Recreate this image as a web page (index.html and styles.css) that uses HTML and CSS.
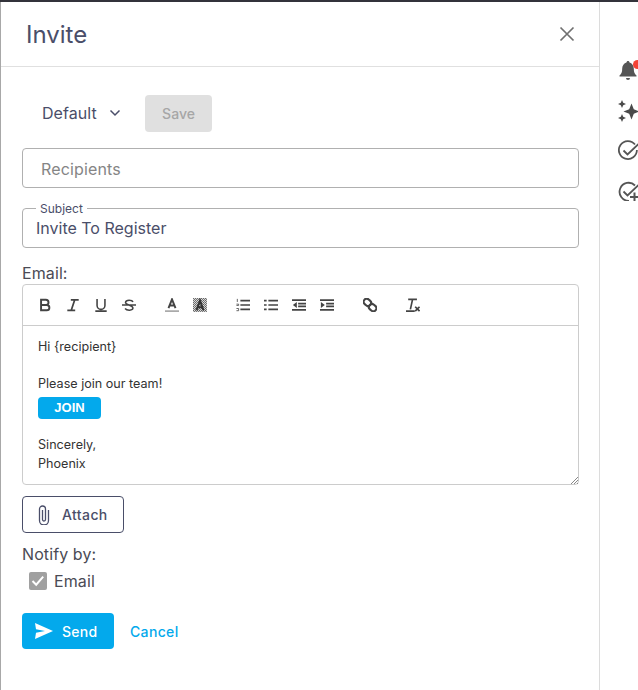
FILE: index.html
```html
<!DOCTYPE html>
<html lang="en">
<head>
    <meta charset="UTF-8">
    <title>Invite</title>
    <link rel="stylesheet" href="styles.css">
</head>
<body>
    <div class="dialog">
        <header class="dialog-header">
            <h1>Invite</h1>
            <button class="close-button" aria-label="Close">
                <svg width="16" height="16" viewBox="0 0 16 16"><path d="M1.5 1.5l13 13M14.5 1.500l-13 13" stroke="#707070" stroke-width="1.700" fill="none"/></svg>
            </button>
        </header>
        <div class="dialog-body">
            <div class="template-row">
                <div class="template-select">
                    <span>Default</span>
                    <svg width="12" height="8" viewBox="0 0 12 8"><path d="M1.500 1.500L6 6l4.500-4.500" stroke="#4a4e69" stroke-width="1.500" fill="none"/></svg>
                </div>
                <button class="save-button">Save</button>
            </div>
            <div class="text-field recipients">Recipients</div>
            <fieldset class="subject-field">
                <legend>Subject</legend>
                <div class="subject-value">Invite To Register</div>
            </fieldset>
            <div class="section-label email-label">Email:</div>
            <div class="editor">
                <div class="editor-toolbar">
                    <div class="tool-group">
                        <svg class="tool" viewBox="0 0 16 16"><path d="M3.500 2h5.500a3 3 0 0 1 0 6H3.500zM3.500 8h6.500a3 3 0 0 1 0 6H3.500z" stroke="#444" stroke-width="2.200" fill="none"/></svg>
                        <svg class="tool" viewBox="0 0 16 16"><path d="M5.500 2h9M1.500 14h9M10 2L6 14" stroke="#444" stroke-width="2" fill="none"/></svg>
                        <svg class="tool" viewBox="0 0 16 16"><path d="M3.500 1v7.500a4.500 4.500 0 0 0 9 0V1M1.500 15h13" stroke="#444" stroke-width="1.800" fill="none"/></svg>
                        <svg class="tool" viewBox="0 0 16 16"><path d="M12.500 4.500C11.500 2 4.500 1.500 4 5c-.4 3 8.500 3 8.500 6.500 0 3-7 3.200-9 .5M0 8h16" stroke="#444" stroke-width="1.700" fill="none"/></svg>
                    </div>
                    <div class="tool-group colors">
                        <svg class="tool" viewBox="0 0 16 16"><path d="M4 11.500L8 1.500l4 10M5.500 8.500h5" stroke="#444" stroke-width="2.200" fill="none"/><path d="M0 15h16" stroke="#aaa" stroke-width="2"/></svg>
                        <svg class="tool" viewBox="0 0 16 16"><defs><pattern id="hatch" width="2.300" height="2.300" patternUnits="userSpaceOnUse"><rect width="1.150" height="1.150" fill="#444"/><rect x="1.150" y="1.150" width="1.150" height="1.150" fill="#444"/></pattern></defs><rect width="16" height="16" fill="url(#hatch)"/><path d="M4 14L8 3l4 11M5.500 10.500h5" stroke="#333" stroke-width="2.400" fill="none"/></svg>
                    </div>
                    <div class="tool-group lists">
                        <svg class="tool" viewBox="0 0 16 16"><path d="M5 3h11M5 8h11M5 13h11" stroke="#444" stroke-width="1.900"/><path d="M1.500 1v3.500M.5 7h2.500v1.500H.5M.5 12h2.500v2.500H.5" stroke="#555" stroke-width="1" fill="none"/></svg>
                        <svg class="tool" viewBox="0 0 16 16"><path d="M5 3h11M5 8h11M5 13h11M0 3h3M0 8h3M0 13h3" stroke="#444" stroke-width="1.900"/></svg>
                        <svg class="tool" viewBox="0 0 16 16"><path d="M0 2.500h16M7 6.500h9M7 9.500h9M0 13.500h16" stroke="#444" stroke-width="1.900"/><path d="M5.500 4.500v7L1 8z" fill="#444"/></svg>
                        <svg class="tool" viewBox="0 0 16 16"><path d="M0 2.500h16M7 6.500h9M7 9.500h9M0 13.500h16" stroke="#444" stroke-width="1.900"/><path d="M1 4.500v7L5.500 8z" fill="#444"/></svg>
                    </div>
                    <div class="tool-group link">
                        <svg class="tool" viewBox="0 0 16 16"><g fill="none" stroke="#444" stroke-width="2.400"><rect x="0.500" y="1.500" width="9" height="7" rx="3.500" transform="rotate(40 5 5)"/><rect x="6.500" y="7.500" width="9" height="7" rx="3.500" transform="rotate(40 11 11)"/></g></svg>
                    </div>
                    <div class="tool-group clear">
                        <svg class="tool" viewBox="0 0 16 16"><path d="M2.500 1.500h10M7.500 1.500L5 13M0 15h10" stroke="#444" stroke-width="1.900" fill="none"/><path d="M10.500 10l5 5M15.500 10l-5 5" stroke="#444" stroke-width="2"/></svg>
                    </div>
                </div>
                <div class="editor-content">
                    <p class="greeting">Hi {recipient}</p>
                    <p class="invite-line">Please join our team!</p>
                    <span class="join-button">JOIN</span>
                    <p class="signoff">Sincerely,<br>Phoenix</p>
                    <svg class="resize-grip" width="7" height="7" viewBox="0 0 7 7"><path d="M0 7L7 0M3 7l4-4M6 7l1-1" stroke="#888"/></svg>
                </div>
            </div>
            <button class="attach-button">
                <svg width="12" height="20" viewBox="0 0 12 20"><path d="M10.500 5v10.500a4.500 4.500 0 0 1-9 0V4a3 3 0 0 1 6 0v10.500a1.500 1.500 0 0 1-3 0V5" stroke="#4a4e69" stroke-width="1.300" fill="none"/></svg>
                Attach
            </button>
            <div class="section-label notify-label">Notify by:</div>
            <label class="check-row">
                <span class="checkbox">
                    <svg width="14" height="12" viewBox="0 0 14 12"><path d="M1.500 6l3.700 3.700 7-8" stroke="#fff" stroke-width="2" fill="none"/></svg>
                </span>
                Email
            </label>
            <div class="action-row">
                <button class="send-button">
                    <svg width="18" height="16" viewBox="0 0 18 16"><path d="M0 0l18 8-18 8 1-6.200L10 8 1 6.200z" fill="#fff"/></svg>
                    Send
                </button>
                <a class="cancel-link" href="#">Cancel</a>
            </div>
        </div>
    </div>
    <aside class="side-rail">
        <div class="rail-icon bell">
            <svg width="20" height="21" viewBox="0 0 20 21"><path d="M10 1c-.9 0-1.500.7-1.500 1.500C6 3.300 4.200 5.500 4.200 8.500c0 3.800-.8 5.500-2.700 7v1h17v-1c-1.900-1.500-2.700-3.200-2.700-7 0-3-1.800-5.200-4.300-6C11.500 1.700 10.900 1 10 1z" fill="#555"/><path d="M8 18h4a2 2 0 0 1-4 0z" fill="#555"/></svg>
            <span class="badge"></span>
        </div>
        <div class="rail-icon">
            <svg width="22" height="22" viewBox="0 0 22 22"><path d="M13.500 3.500l2.300 5.700 5.700 2.300-5.700 2.300-2.300 5.700-2.300-5.700-5.700-2.300 5.700-2.300z" fill="#4a4a4a"/><path d="M4 0l1.200 2.800L8 4 5.200 5.200 4 8 2.800 5.200 0 4l2.800-1.200zM4 14l1.200 2.800L8 18l-2.800 1.200L4 22l-1.200-2.800L0 18l2.800-1.200z" fill="#4a4a4a"/></svg>
        </div>
        <div class="rail-icon">
            <svg width="22" height="21" viewBox="0 -1 22 21"><path d="M17 3.500A9 9 0 1 0 18.900 9" stroke="#555" stroke-width="1.800" fill="none"/><path d="M5.500 9.500l4 4L21 2.500" stroke="#555" stroke-width="1.800" fill="none"/></svg>
        </div>
        <div class="rail-icon">
            <svg width="22" height="21" viewBox="0 -2 22 21"><path d="M17 3.500A9 9 0 1 0 11 18.800" stroke="#555" stroke-width="1.800" fill="none"/><path d="M5.500 9.500l4 4L21 2.500" stroke="#555" stroke-width="1.800" fill="none"/><path d="M16.500 10.500v9M12 15h9" stroke="#555" stroke-width="2"/></svg>
        </div>
    </aside>
</body>
</html>
```

FILE: styles.css
```css
* {
    box-sizing: border-box;
    margin: 0;
    padding: 0;
    font-family: 'Inter', sans-serif;
}

body {
    display: flex;
    width: 638px;
    height: 690px;
    overflow: hidden;
    background-color: #fff;
    border-top: 2px solid #33333b;
    color: #4a4e69;
}

button {
    border: none;
    background: none;
}

.dialog {
    width: 600px;
    flex-shrink: 0;
    border-left: 1px solid #a8a8a8;
    border-right: 1px solid #dcdcdc;
}

.dialog-header {
    display: flex;
    justify-content: space-between;
    align-items: center;
    height: 65px;
    padding: 0 24px 0 25px;
    border-bottom: 1px solid #e0e0e0;
}

.dialog-header h1 {
    font-size: 24px;
    font-weight: 400;
    color: #4a4e69;
}

.close-button {
    display: flex;
}

.dialog-body {
    padding: 28px 20px 0 21px;
}

.template-row {
    display: flex;
    align-items: center;
    height: 37px;
    padding-left: 20px;
}

.template-select {
    display: flex;
    align-items: center;
    gap: 12px;
    width: 103px;
    margin-top: -2px;
    font-size: 16px;
    letter-spacing: 0.05px;
}

.save-button {
    width: 67px;
    height: 37px;
    border-radius: 4px;
    background-color: #e0e0e0;
    color: #a6a6a6;
    font-size: 14px;
    font-weight: 500;
}

.text-field {
    height: 40px;
    margin-top: 16px;
    padding-left: 18px;
    line-height: 40px;
    border: 1px solid #b0b0b0;
    border-radius: 4px;
    font-size: 16px;
    letter-spacing: 0.15px;
    color: #858585;
}

.subject-field {
    height: 48px;
    margin-top: 12px;
    padding: 0 13px;
    border: 1px solid #b0b0b0;
    border-radius: 4px;
}

.subject-field legend {
    padding: 2px 4px 0;
    font-size: 12px;
    line-height: 14px;
}

.subject-value {
    margin-top: 2px;
    font-size: 16px;
    line-height: 20px;
}

.section-label {
    font-size: 16px;
    line-height: 20px;
    letter-spacing: 0.1px;
    color: #4b4b55;
}

.email-label {
    margin-top: 15px;
}

.editor {
    margin-top: 1px;
    border: 1px solid #ccc;
    border-radius: 4px;
}

.editor-toolbar {
    display: flex;
    align-items: center;
    height: 41px;
    padding-left: 15px;
    border-bottom: 1px solid #ccc;
}

.tool-group {
    display: flex;
    gap: 14px;
}

.tool {
    width: 14px;
    height: 14px;
}

.colors,
.lists,
.link,
.clear {
    margin-left: 29px;
}

.editor-content {
    position: relative;
    height: 158px;
    padding: 11px 15px 0;
    font-family: 'Liberation Sans', sans-serif;
    font-size: 12.6px;
    line-height: 19px;
    color: #333;
}

.invite-line {
    margin-top: 18px;
}

.join-button {
    display: block;
    width: 63px;
    height: 22px;
    margin-top: 4px;
    border-radius: 4px;
    background-color: #03a9ec;
    color: #fff;
    font-family: 'Liberation Sans', sans-serif;
    font-size: 13px;
    font-weight: 700;
    line-height: 22px;
    text-align: center;
}

.signoff {
    margin-top: 16px;
}

/* sits in the corner over the text area */
.resize-grip {
    position: absolute;
    right: 0;
    bottom: 0;
}

.attach-button {
    display: flex;
    align-items: center;
    gap: 12px;
    width: 102px;
    height: 37px;
    margin-top: 11px;
    padding-left: 15px;
    border: 1px solid #4a4e69;
    border-radius: 4px;
    color: #4a4e69;
    font-size: 14px;
    font-weight: 500;
    letter-spacing: 0.4px;
}

.notify-label {
    margin-top: 11px;
}

.check-row {
    display: flex;
    align-items: center;
    gap: 7px;
    margin-top: 8px;
    padding-left: 7px;
    font-size: 16px;
    line-height: 18px;
    letter-spacing: 0.1px;
    color: #4b4b55;
}

.checkbox {
    display: flex;
    align-items: center;
    justify-content: center;
    width: 18px;
    height: 18px;
    border-radius: 2px;
    background-color: #a0a0a0;
}

.action-row {
    display: flex;
    align-items: center;
    gap: 16px;
    margin-top: 23px;
}

.send-button {
    display: flex;
    align-items: center;
    gap: 9px;
    width: 92px;
    height: 36px;
    padding-left: 13px;
    border-radius: 4px;
    background-color: #03a9ec;
    color: #fff;
    font-size: 14px;
    font-weight: 500;
    letter-spacing: 0.3px;
}

.cancel-link {
    color: #03a9ec;
    font-size: 14px;
    font-weight: 500;
    letter-spacing: 0.35px;
    text-decoration: none;
}

.side-rail {
    display: flex;
    flex-direction: column;
    gap: 19px;
    padding: 58px 0 0 18px;
    width: 38px;
    flex-shrink: 0;
}

.rail-icon {
    position: relative;
    display: flex;
    width: 22px;
    height: 21px;
}

/* notification dot over the bell */
.badge {
    position: absolute;
    top: 0;
    left: 15px;
    width: 9px;
    height: 9px;
    border-radius: 50%;
    background-color: #f44336;
}
```
